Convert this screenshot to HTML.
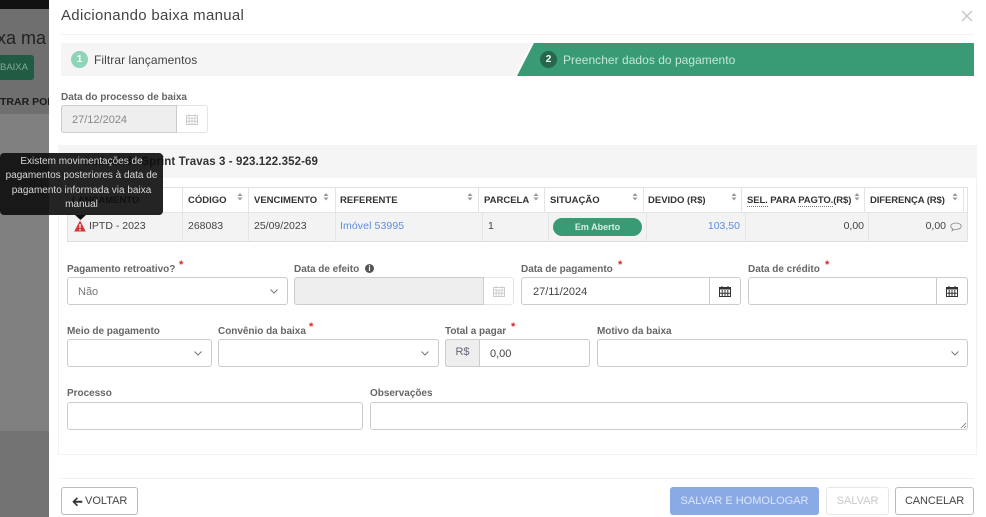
<!DOCTYPE html>
<html><head><meta charset="utf-8"><style>
*{box-sizing:border-box}
html,body{margin:0;padding:0;width:986px;height:517px;overflow:hidden;background:#7f7f7f;font-family:"Liberation Sans",sans-serif}
.a,.t{position:absolute}
.t{white-space:nowrap;color:#555;font-size:11px;line-height:14px;transform:translateY(2px)}
.h{color:#333;font-weight:bold;font-size:9.5px}
.l{color:#666;font-weight:bold;font-size:10px;letter-spacing:-.03px;transform:translateY(3px)}
.c{font-size:10.5px;color:#444}
.b{position:absolute;background:#fff;border:1px solid #ccc;border-radius:3px;height:28px}
.s{position:absolute;color:#d22;font-size:11px;font-weight:bold}
svg{position:absolute;display:block}
.sep{position:absolute;background:#e4e4e4}
</style></head><body>
<div class="a" style="left:0;top:0;width:49px;height:9px;background:#111"></div>
<div class="a" style="left:0;top:9px;width:49px;height:105px;background:#6f6f6f"></div>
<div class="a" style="left:0;top:114px;width:49px;height:317px;background:#808080"></div>
<div class="a" style="left:0;top:431px;width:49px;height:86px;background:#727272"></div>
<div class="t" style="left:-3px;top:24px;font-size:18px;line-height:24px;color:#222">xa ma</div>
<div class="a" style="left:-5px;top:55px;width:39px;height:25px;background:#1f5c43;border-radius:3px"></div>
<div class="t" style="left:0;top:59px;color:#86a898;font-size:9.500px">BAIXA</div>
<div class="t" style="left:0;top:93px;color:#1c1c1c;font-weight:bold;font-size:10.5px">TRAR POR</div>

<div class="a" style="left:49px;top:0;width:937px;height:517px;background:#fff"></div>
<div class="t" style="left:61px;top:4px;font-size:15px;line-height:20px;color:#444;letter-spacing:.3px">Adicionando baixa manual</div>
<svg style="left:961px;top:10px" width="12" height="12" viewBox="0 0 12 12"><path d="M1 1L11 11M11 1L1 11" stroke="#c4c4c4" stroke-width="1.3"/></svg>
<div class="a" style="left:61px;top:34px;width:913px;height:1px;background:#f2f2f2"></div>

<div class="a" style="left:61px;top:43px;width:913px;height:33px;background:#f5f5f5"></div>
<svg style="left:515px;top:43px" width="459" height="34"><path d="M19 0H459V33H2Z" fill="#389b73"/><path d="M17.500 0L0.500 33" stroke="#fff" stroke-width="1.500"/></svg>
<div class="a" style="left:71px;top:51px;width:17px;height:17px;border-radius:50%;background:#8fd3b8;color:#fff;font-size:10px;line-height:17px;text-align:center;font-weight:bold">1</div>
<div class="t" style="left:94px;top:51px;font-size:12px;color:#444;letter-spacing:.07px">Filtrar lançamentos</div>
<div class="a" style="left:540px;top:51px;width:17px;height:17px;border-radius:50%;background:#25684d;color:#fff;font-size:10px;line-height:17px;text-align:center;font-weight:bold">2</div>
<div class="t" style="left:563px;top:51px;font-size:12px;color:#c6e5d8;letter-spacing:.03px">Preencher dados do pagamento</div>

<div class="t l" style="left:61px;top:88px">Data do processo de baixa</div>
<div class="a" style="left:61px;top:105px;width:147px;height:28px;border:1px solid #e4e4e4;border-radius:3px;background:#fff"></div>
<div class="a" style="left:61px;top:105px;width:116px;height:28px;border:1px solid #ccc;border-radius:3px 0 0 3px;background:#eee"></div>
<div class="t" style="left:72px;top:111px;color:#888">27/12/2024</div>
<svg style="left:186px;top:113px" width="12" height="12" viewBox="0 0 12 12"><path d="M.5 2.500h11v9h-11zM.5 5h11M3 1v2.500M9 1v2.500M3.200 5v6.500M6 5v6.500M8.800 5v6.500M.5 8.200h11" fill="none" stroke="#ccc" stroke-width="1"/></svg>

<div class="a" style="left:58px;top:145px;width:919px;height:310px;border:1px solid #f2f2f2;border-top:0;background:#fff"></div>
<div class="a" style="left:58px;top:145px;width:919px;height:33px;background:#f5f5f5"></div>
<div class="t" style="right:668px;top:153px;color:#333;font-weight:bold;font-size:11.5px;letter-spacing:.1px">Imóvel de Sprint Travas 3 - 923.122.352-69</div>

<!-- table -->
<div class="a" style="left:67px;top:187px;width:901px;height:55px;border:1px solid #e2e2e2;border-bottom:1px solid #ddd;background:#fff"></div>
<div class="a" style="left:68px;top:212px;width:899px;height:29px;background:#f3f3f3;border-top:1px solid #e4e4e4"></div>
<div class="sep" style="left:182px;top:188px;width:1px;height:53px"></div>
<div class="sep" style="left:248px;top:188px;width:1px;height:53px"></div>
<div class="sep" style="left:335px;top:188px;width:1px;height:53px"></div>
<div class="sep" style="left:478px;top:188px;width:1px;height:24px"></div>
<div class="sep" style="left:482px;top:212px;width:1px;height:29px"></div>
<div class="sep" style="left:544px;top:188px;width:1px;height:24px"></div>
<div class="sep" style="left:548px;top:212px;width:1px;height:29px"></div>
<div class="sep" style="left:643px;top:188px;width:1px;height:24px"></div>
<div class="sep" style="left:646px;top:212px;width:1px;height:29px"></div>
<div class="sep" style="left:741px;top:188px;width:1px;height:24px"></div>
<div class="sep" style="left:745px;top:212px;width:1px;height:29px"></div>
<div class="sep" style="left:864px;top:188px;width:1px;height:24px"></div>
<div class="sep" style="left:868px;top:212px;width:1px;height:29px"></div>
<div class="sep" style="left:963px;top:188px;width:1px;height:24px"></div>

<div class="t h" style="left:72px;top:192px;color:#333">LANÇAMENTO</div>
<div class="t h" style="left:188px;top:192px">CÓDIGO</div>
<div class="t h" style="left:254px;top:192px">VENCIMENTO</div>
<div class="t h" style="left:340px;top:192px">REFERENTE</div>
<div class="t h" style="left:484px;top:192px">PARCELA</div>
<div class="t h" style="left:550px;top:192px">SITUAÇÃO</div>
<div class="t h" style="left:648px;top:192px">DEVIDO (R$)</div>
<div class="t h" style="left:747px;top:192px;letter-spacing:-.1px"><span style="border-bottom:1px dotted #777">SEL.</span> PARA <span style="border-bottom:1px dotted #777">PAGTO.</span>(R$)</div>
<div class="t h" style="left:870px;top:192px;letter-spacing:-.1px">DIFERENÇA (R$)</div>
<svg style="left:0;top:0" width="986" height="210"><g fill="#999"><path d="M237.500 196l2.500-3 2.500 3zM237.500 197.500l2.500 3 2.500-3z"/><path d="M323.500 196l2.500-3 2.500 3zM323.500 197.500l2.500 3 2.500-3z"/><path d="M467.500 196l2.500-3 2.500 3zM467.500 197.500l2.500 3 2.500-3z"/><path d="M533.500 196l2.500-3 2.500 3zM533.500 197.500l2.500 3 2.500-3z"/><path d="M632.500 196l2.500-3 2.500 3zM632.500 197.500l2.500 3 2.500-3z"/><path d="M731.500 196l2.500-3 2.500 3zM731.500 197.500l2.500 3 2.500-3z"/><path d="M854.500 196l2.500-3 2.500 3zM854.500 197.500l2.500 3 2.500-3z"/><path d="M952.500 196l2.500-3 2.500 3zM952.500 197.500l2.500 3 2.500-3z"/></g></svg>

<svg style="left:74px;top:220px" width="12" height="12" viewBox="0 0 12 12"><path d="M6 .5L11.800 11.500H.2Z" fill="#d9333a"/><path d="M6 4v4M6 9v1.500" stroke="#fff" stroke-width="1.300"/></svg>
<div class="t c" style="left:89px;top:217px">IPTD - 2023</div>
<div class="t c" style="left:188px;top:217px">268083</div>
<div class="t c" style="left:254px;top:217px">25/09/2023</div>
<div class="t c" style="left:340px;top:217px;color:#5b8ee0;letter-spacing:.1px">Imóvel 53995</div>
<div class="t c" style="left:488px;top:217px">1</div>
<div class="a" style="left:553px;top:218px;width:89px;height:18px;border-radius:9px;background:#389b73;color:#d8eee5;font-size:9px;font-weight:bold;line-height:18px;text-align:center">Em Aberto</div>
<div class="t c" style="right:246px;top:217px;color:#5b8ee0">103,50</div>
<div class="t c" style="right:122px;top:217px">0,00</div>
<div class="t c" style="right:40px;top:217px">0,00</div>
<svg style="left:950px;top:222px" width="12" height="10" viewBox="0 0 12 10"><path d="M6 1C3 1 .8 2.400.8 4.200c0 1 .7 1.900 1.800 2.400L2 8.800l2.600-1.500c.5.1.9.100 1.400.100 3 0 5.200-1.400 5.200-3.200S9 1 6 1z" fill="none" stroke="#888" stroke-width=".8"/></svg>

<!-- row 1 -->
<div class="t l" style="left:67px;top:260px">Pagamento retroativo?</div><div class="s" style="left:179px;top:259px">*</div>
<div class="b" style="left:67px;top:277px;width:221px"></div>
<div class="t" style="left:78px;top:283px;color:#777">Não</div>
<svg style="left:269px;top:288px" width="10" height="7"><path d="M1.500 1.500L5 5 8.500 1.500" fill="none" stroke="#777"/></svg>

<div class="t l" style="left:294px;top:260px">Data de efeito</div>
<div class="a" style="left:365px;top:264px;width:9px;height:9px;border-radius:50%;background:#555;color:#fff;font:bold 8px/9px 'Liberation Sans',sans-serif;text-align:center">i</div>
<div class="a" style="left:294px;top:277px;width:220px;height:28px;border:1px solid #e6e6e6;border-radius:3px;background:#fff"></div>
<div class="a" style="left:294px;top:277px;width:190px;height:28px;border:1px solid #ccc;border-radius:3px 0 0 3px;background:#eee"></div>
<svg style="left:493px;top:285px" width="12" height="12" viewBox="0 0 12 12"><path d="M.5 2.500h11v9h-11zM.5 5h11M3 1v2.500M9 1v2.500M3.200 5v6.500M6 5v6.500M8.800 5v6.500M.5 8.200h11" fill="none" stroke="#ccc" stroke-width="1"/></svg>

<div class="t l" style="left:521px;top:260px">Data de pagamento</div><div class="s" style="left:618px;top:259px">*</div>
<div class="b" style="left:521px;top:277px;width:220px"></div>
<div class="sep" style="left:709px;top:278px;width:1px;height:26px;background:#ccc"></div>
<div class="t" style="left:533px;top:283px;color:#444">27/11/2024</div>
<svg style="left:719px;top:285px" width="12" height="12" viewBox="0 0 12 12"><path d="M.5 2h11v2.500H.5z" fill="#333"/><path d="M.5 2.500h11v9h-11zM3 1v2.500M9 1v2.500M3.200 5v6.500M6 5v6.500M8.800 5v6.500M.5 8.200h11" fill="none" stroke="#333" stroke-width="1"/></svg>

<div class="t l" style="left:748px;top:260px">Data de crédito</div><div class="s" style="left:825px;top:259px">*</div>
<div class="b" style="left:748px;top:277px;width:220px"></div>
<div class="sep" style="left:936px;top:278px;width:1px;height:26px;background:#ccc"></div>
<svg style="left:946px;top:285px" width="12" height="12" viewBox="0 0 12 12"><path d="M.5 2h11v2.500H.5z" fill="#333"/><path d="M.5 2.500h11v9h-11zM3 1v2.500M9 1v2.500M3.200 5v6.500M6 5v6.500M8.800 5v6.500M.5 8.200h11" fill="none" stroke="#333" stroke-width="1"/></svg>

<!-- row 2 -->
<div class="t l" style="left:67px;top:322px">Meio de pagamento</div>
<div class="b" style="left:67px;top:339px;width:145px"></div>
<svg style="left:193px;top:350px" width="10" height="7"><path d="M1.500 1.500L5 5 8.500 1.500" fill="none" stroke="#777"/></svg>
<div class="t l" style="left:218px;top:322px">Convênio da baixa</div><div class="s" style="left:309px;top:321px">*</div>
<div class="b" style="left:218px;top:339px;width:221px"></div>
<svg style="left:420px;top:350px" width="10" height="7"><path d="M1.500 1.500L5 5 8.500 1.500" fill="none" stroke="#777"/></svg>
<div class="t l" style="left:445px;top:322px">Total a pagar</div><div class="s" style="left:511px;top:321px">*</div>
<div class="b" style="left:445px;top:339px;width:145px"></div>
<div class="a" style="left:445px;top:339px;width:35px;height:28px;background:#eee;border:1px solid #ccc;border-radius:3px 0 0 3px;color:#667;font-size:11px;line-height:24px;text-align:center">R$</div>
<div class="t" style="left:490px;top:345px;color:#444">0,00</div>
<div class="t l" style="left:597px;top:322px">Motivo da baixa</div>
<div class="b" style="left:597px;top:339px;width:371px"></div>
<svg style="left:950px;top:350px" width="10" height="7"><path d="M1.500 1.500L5 5 8.500 1.500" fill="none" stroke="#777"/></svg>

<!-- row 3 -->
<div class="t l" style="left:67px;top:384px">Processo</div>
<div class="b" style="left:67px;top:402px;width:296px"></div>
<div class="t l" style="left:370px;top:384px">Observações</div>
<div class="b" style="left:370px;top:402px;width:598px"></div>
<svg style="left:960px;top:421px" width="7" height="8"><path d="M1 7L6 2M4 7L6 5" stroke="#777" stroke-width=".8"/></svg>

<!-- footer -->
<div class="a" style="left:61px;top:478px;width:913px;height:1px;background:#f0f0f0"></div>
<div class="a" style="left:61px;top:487px;width:77px;height:28px;border:1px solid #bbb;border-radius:3px;background:#fff"></div>
<svg style="left:72px;top:497px" width="11" height="10" viewBox="0 0 11 10"><path d="M4.800 .2L.3 4.700 4.800 9.300 6 8.100 3.600 5.800H10.300V3.700H3.600L6 1.400Z" fill="#333"/></svg>
<div class="t" style="left:85px;top:492px;color:#444;font-size:11px">VOLTAR</div>
<div class="a" style="left:670px;top:487px;width:149px;height:28px;border-radius:3px;background:#8aaae6;color:#dce6f8;font-size:11px;line-height:28px;text-align:center">SALVAR E HOMOLOGAR</div>
<div class="a" style="left:826px;top:487px;width:63px;height:28px;border:1px solid #e8e8e8;border-radius:3px;color:#c8c8c8;font-size:11px;line-height:26px;text-align:center">SALVAR</div>
<div class="a" style="left:895px;top:487px;width:79px;height:28px;border:1px solid #bbb;border-radius:3px;color:#444;font-size:11px;line-height:26px;text-align:center;letter-spacing:-.1px">CANCELAR</div>

<!-- tooltip -->
<div class="a" style="left:0;top:153px;width:163px;height:62px;background:rgba(12,12,12,.9);border-radius:4px;color:#d8d8d8;font-size:10px;line-height:14.500px;text-align:center;padding-top:1.500px">Existem movimentações de<br>pagamentos posteriores à data de<br>pagamento informada via baixa<br>manual</div>
<svg style="left:75px;top:215px" width="11" height="5"><path d="M0 0H11L5.500 5Z" fill="#111"/></svg>
</body></html>
